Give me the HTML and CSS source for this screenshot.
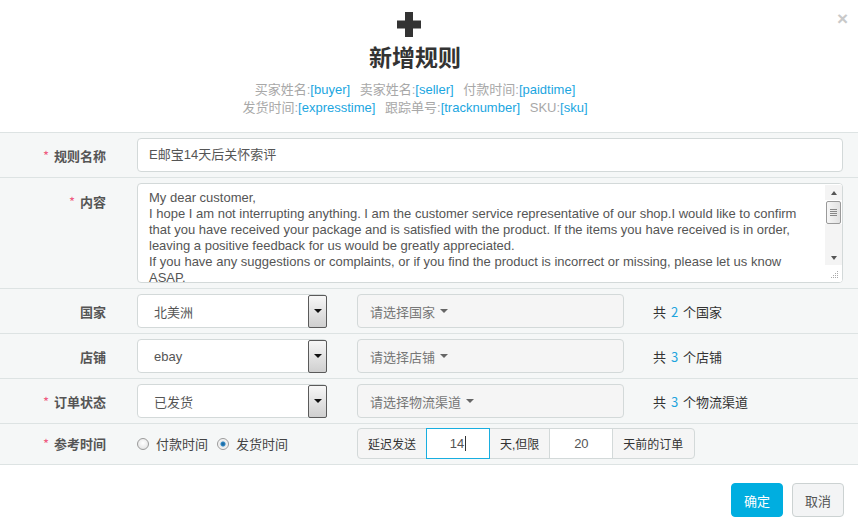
FILE: index.html
```html
<!DOCTYPE html>
<html lang="zh">
<head>
<meta charset="utf-8">
<title>新增规则</title>
<link rel="stylesheet" href="styles.css">
</head>
<body>
<div class="dialog">
  <span class="close">×</span>
  <header class="head">
    <svg class="plus" width="24" height="25" viewBox="0 0 24 25"><path d="M8 0h8v8.5h8v8h-8V25H8v-8.5H0v-8h8z" fill="#333"/></svg>
    <h1 class="title">新增规则</h1>
    <p class="vars">
      <span class="var">买家姓名:<b>[buyer]</b></span>
      <span class="var">卖家姓名:<b>[seller]</b></span>
      <span class="var">付款时间:<b>[paidtime]</b></span>
    </p>
    <p class="vars">
      <span class="var">发货时间:<b>[expresstime]</b></span>
      <span class="var">跟踪单号:<b>[tracknumber]</b></span>
      <span class="var">SKU:<b>[sku]</b></span>
    </p>
  </header>

  <div class="form">
    <div class="row">
      <label class="lbl"><i>*</i>规则名称</label>
      <div class="field"><div class="input">E邮宝14天后关怀索评</div></div>
    </div>
    <div class="row row-text">
      <label class="lbl lbl-top"><i>*</i>内容</label>
      <div class="field">
        <div class="textarea">
          <div class="ta-text">My dear customer,<br>I hope I am not interrupting anything. I am the customer service representative of our shop.I would like to confirm that you have received your package and is satisfied with the product. If the items you have received is in order, leaving a positive feedback for us would be greatly appreciated.<br>If you have any suggestions or complaints, or if you find the product is incorrect or missing, please let us know ASAP.</div>
          <div class="sbar">
            <span class="sb-btn"><span class="tri-up"></span></span>
            <span class="sb-thumb"><span></span><span></span><span></span><span></span></span>
            <span class="sb-track"></span>
            <span class="sb-btn"><span class="tri-down"></span></span>
            <span class="sb-grip">
              <svg width="8" height="8" viewBox="0 0 8 8"><g fill="#aaa"><rect x="6" y="0" width="1" height="1"/><rect x="4" y="2" width="1" height="1"/><rect x="6" y="2" width="1" height="1"/><rect x="2" y="4" width="1" height="1"/><rect x="4" y="4" width="1" height="1"/><rect x="6" y="4" width="1" height="1"/><rect x="0" y="6" width="1" height="1"/><rect x="2" y="6" width="1" height="1"/><rect x="4" y="6" width="1" height="1"/><rect x="6" y="6" width="1" height="1"/></g></svg>
            </span>
          </div>
        </div>
      </div>
    </div>
    <div class="row">
      <label class="lbl">国家</label>
      <div class="field inline">
        <div class="select"><span>北美洲</span><span class="sel-btn"><span class="tri-down dark"></span></span></div>
        <div class="dd">请选择国家<span class="caret"></span></div>
        <div class="count">共 <em>2</em> 个国家</div>
      </div>
    </div>
    <div class="row">
      <label class="lbl">店铺</label>
      <div class="field inline">
        <div class="select"><span>ebay</span><span class="sel-btn"><span class="tri-down dark"></span></span></div>
        <div class="dd">请选择店铺<span class="caret"></span></div>
        <div class="count">共 <em>3</em> 个店铺</div>
      </div>
    </div>
    <div class="row">
      <label class="lbl"><i>*</i>订单状态</label>
      <div class="field inline">
        <div class="select"><span>已发货</span><span class="sel-btn"><span class="tri-down dark"></span></span></div>
        <div class="dd">请选择物流渠道<span class="caret"></span></div>
        <div class="count">共 <em>3</em> 个物流渠道</div>
      </div>
    </div>
    <div class="row row-last">
      <label class="lbl"><i>*</i>参考时间</label>
      <div class="field inline">
        <div class="radios">
          <span class="radio"></span><span class="rtext">付款时间</span>
          <span class="radio on"></span><span class="rtext">发货时间</span>
        </div>
        <div class="igroup">
          <span class="addon">延迟发送</span>
          <span class="gin focus">14<span class="cursor"></span></span>
          <span class="addon">天,但限</span>
          <span class="gin">20</span>
          <span class="addon">天前的订单</span>
        </div>
      </div>
    </div>
  </div>

  <footer class="foot">
    <button class="btn btn-primary">确定</button>
    <button class="btn">取消</button>
  </footer>
</div>
</body>
</html>
```
FILE: styles.css
```css
* { box-sizing: border-box; }
html, body { margin: 0; padding: 0; background: #fff; }
body {
  font-family: "Liberation Sans", "Noto Sans CJK SC", sans-serif;
  font-size: 13px;
  color: #555;
  width: 858px;
  height: 518px;
  overflow: hidden;
}
.dialog { position: relative; width: 858px; }
.close {
  position: absolute;
  right: 10px;
  top: 8px;
  font-size: 19px;
  font-weight: bold;
  color: #c9c9c9;
  line-height: 22px;
}
.head { text-align: center; padding: 12px 28px 0 0; height: 132px; }
.plus { display: block; margin-left: calc(50% - 18px); }
.title {
  margin: 6px 0 11px;
  font-family: "Noto Sans CJK SC", sans-serif;
  font-size: 23px;
  line-height: 27px;
  font-weight: bold;
  color: #333;
}
.vars { margin: 0; line-height: 18px; color: #a8a8a8; font-size: 13px; }
.var { margin: 0 3px; }
.var b { font-weight: normal; color: #1ba6df; }

.form { background: #f5f7f7; border-top: 1px solid #dde3e3; }
.row {
  display: grid;
  grid-template-columns: 137px 1fr;
  align-items: center;
  border-bottom: 1px solid #dde3e3;
  padding: 5px 15px 5px 0;
}
.lbl {
  text-align: right;
  padding-right: 31px;
  font-family: "Noto Sans CJK SC", sans-serif;
  font-weight: bold;
  color: #555;
  font-size: 13px;
}
.lbl i { font-style: normal; font-weight: normal; color: #ef5b80; margin-right: 5px; }
.lbl-top { align-self: start; padding-top: 9px; }
.input {
  height: 34px;
  background: #fff;
  border: 1px solid #d3d9d9;
  border-radius: 4px;
  padding: 0 11px;
  line-height: 32px;
  color: #555;
}
.textarea {
  display: flex;
  height: 100px;
  background: #fff;
  border: 1px solid #d3d9d9;
  border-radius: 4px;
  overflow: hidden;
}
.ta-text {
  flex: 1;
  padding: 6px 16px 0 11px;
  line-height: 16px;
  overflow: hidden;
  color: #555;
}
.sbar { width: 17px; display: flex; flex-direction: column; padding-top: 1px; background: #fff; }
.sb-btn { height: 15px; background: #f4f4f4; display: flex; align-items: center; justify-content: center; }
.sb-thumb {
  margin: 1px 1px 0;
  height: 23px;
  border: 1px solid #9a9a9a;
  border-radius: 2px;
  background: linear-gradient(to right, #f6f6f6, #e2e2e2);
  display: flex;
  flex-direction: column;
  align-items: center;
  justify-content: center;
  gap: 1px;
}
.sb-thumb span { display: block; width: 7px; height: 1px; background: #888; }
.sb-track { flex: 1; background: #f4f4f4; }
.sb-grip { height: 17px; background: #fff; display: flex; align-items: flex-end; justify-content: flex-end; padding: 0 3px 3px 0; }
.tri-up { width: 0; height: 0; border-left: 3px solid transparent; border-right: 3px solid transparent; border-bottom: 4px solid #555; }
.tri-down { width: 0; height: 0; border-left: 3px solid transparent; border-right: 3px solid transparent; border-top: 4px solid #555; }
.tri-down.dark { border-left-width: 4px; border-right-width: 4px; border-top: 4px solid #111; }

.inline { display: flex; align-items: center; }
.select {
  width: 190px;
  height: 34px;
  background: #fff;
  border: 1px solid #d3d9d9;
  border-radius: 4px;
  display: flex;
  align-items: center;
  justify-content: space-between;
  padding: 0 0 0 16px;
  color: #555;
}
.sel-btn {
  width: 19px;
  height: 33px;
  margin-right: -1px;
  border: 1px solid #5a5a5a;
  border-radius: 2px;
  background: linear-gradient(to bottom, #f7f7f7, #cfcfcf);
  display: flex;
  align-items: center;
  justify-content: center;
}
.dd {
  width: 267px;
  height: 34px;
  margin-left: 30px;
  background: #f5f5f5;
  border: 1px solid #d3d9d9;
  border-radius: 4px;
  padding: 0 12px;
  display: flex;
  align-items: center;
  color: #777;
  font-family: "Noto Sans CJK SC", sans-serif;
}
.caret { margin-left: 5px; width: 0; height: 0; border-left: 4px solid transparent; border-right: 4px solid transparent; border-top: 4px solid #666; }
.count { margin-left: 29px; color: #333; font-family: "Noto Sans CJK SC", sans-serif; }
.count em { font-style: normal; color: #1ea4dd; margin: 0 2px; }

.row-last { padding: 4px 15px 5px 0; }
.radios { display: flex; align-items: center; width: 220px; font-family: "Noto Sans CJK SC", sans-serif; color: #444; }
.radio {
  width: 12px; height: 12px; border-radius: 50%;
  border: 1px solid #9a9a9a;
  background: radial-gradient(circle at 50% 40%, #fff, #ddd);
  margin-right: 7px;
}
.radio.on { background: radial-gradient(circle, #1b5e8f 0, #2a86c5 2px, #e9e9e9 3px, #fff 6px); }
.rtext { margin-right: 9px; }
.igroup {
  display: flex;
  height: 31px;
  border: 1px solid #d3d9d9;
  border-radius: 4px;
  background: #f5f5f5;
  font-family: "Liberation Sans", "Noto Sans CJK SC", sans-serif;
  font-size: 12px;
  color: #333;
}
.addon { display: flex; align-items: center; padding: 0 10px; }
.addon:last-child { padding-right: 11px; }
.gin {
  width: 64px;
  background: #fff;
  display: flex; align-items: center; justify-content: center;
  border-left: 1px solid #d3d9d9;
  border-right: 1px solid #d3d9d9;
  color: #555;
  font-size: 13px;
}
.gin.focus { border: 1px solid #18aee0; margin: -1px 0; height: 31px; }
.cursor { display: inline-block; width: 1px; height: 15px; background: #333; margin-left: 1px; }

.foot { display: flex; justify-content: flex-end; gap: 9px; padding: 18px 14px 0 0; }
.btn {
  height: 34px;
  width: 52px;
  border-radius: 4px;
  border: 1px solid #ccd2d2;
  background: #f3f4f5;
  color: #555;
  font-family: "Noto Sans CJK SC", sans-serif;
  font-size: 13px;
  padding: 0;
}
.btn-primary { background: #00aee0; border-color: #00aee0; color: #fff; }
```
